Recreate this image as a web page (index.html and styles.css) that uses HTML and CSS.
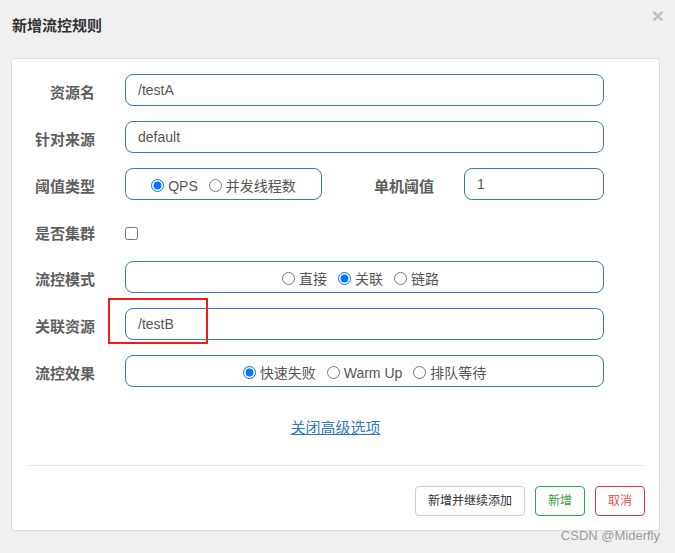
FILE: index.html
```html
<!DOCTYPE html>
<html lang="zh-CN">
<head>
<meta charset="utf-8">
<title>新增流控规则</title>
<link rel="stylesheet" href="styles.css">
</head>
<body>
<div class="modal">
  <div class="header">
    <div class="title">新增流控规则</div>
    <span class="close">×</span>
  </div>
  <div class="card">
    <div class="form">
      <div class="row">
        <label class="label">资源名</label>
        <div class="control"><input class="input" type="text" value="/testA"></div>
      </div>
      <div class="row">
        <label class="label">针对来源</label>
        <div class="control"><input class="input" type="text" value="default"></div>
      </div>
      <div class="row">
        <label class="label">阈值类型</label>
        <div class="box box-small">
          <label class="opt"><input class="radio" type="radio" name="grade" checked>QPS</label>
          <label class="opt"><input class="radio" type="radio" name="grade">并发线程数</label>
        </div>
        <label class="label label-mid">单机阈值</label>
        <input class="input input-small" type="text" value="1">
      </div>
      <div class="row row-check">
        <label class="label">是否集群</label>
        <input class="check" type="checkbox">
      </div>
      <div class="row">
        <label class="label">流控模式</label>
        <div class="box box-wide shift">
          <label class="opt"><input class="radio" type="radio" name="mode">直接</label>
          <label class="opt"><input class="radio" type="radio" name="mode" checked>关联</label>
          <label class="opt"><input class="radio" type="radio" name="mode">链路</label>
        </div>
      </div>
      <div class="row row-mark">
        <label class="label">关联资源</label>
        <div class="control"><input class="input" type="text" value="/testB"></div>
        <div class="mark"></div>
      </div>
      <div class="row">
        <label class="label">流控效果</label>
        <div class="box box-wide">
          <label class="opt"><input class="radio" type="radio" name="effect" checked>快速失败</label>
          <label class="opt"><input class="radio" type="radio" name="effect">Warm Up</label>
          <label class="opt"><input class="radio" type="radio" name="effect">排队等待</label>
        </div>
      </div>
    </div>
    <div class="more"><a class="link" href="#">关闭高级选项</a></div>
    <div class="footer">
      <button class="btn btn-default">新增并继续添加</button>
      <button class="btn btn-ok">新增</button>
      <button class="btn btn-cancel">取消</button>
    </div>
  </div>
</div>
<div class="watermark">CSDN @Miderfly</div>
</body>
</html>
```
FILE: styles.css
```css
html, body {
  margin: 0;
  padding: 0;
  background: #f0f0f0;
  font-family: "Liberation Sans", "Noto Sans CJK SC", sans-serif;
  color: #333;
}

.modal {
  width: 675px;
  height: 553px;
}

.header {
  display: flex;
  justify-content: space-between;
  align-items: flex-start;
  padding: 15px 11px 21px 12px;
}

.title {
  font-size: 15px;
  font-weight: bold;
  line-height: 22px;
  color: #333;
}

.close {
  font-size: 21px;
  font-weight: bold;
  line-height: 21px;
  color: #c0c0c0;
  margin-top: -10px;
}

.card {
  margin: 0 15px 0 11px;
  background: #fff;
  border: 1px solid #dcdcdc;
  border-radius: 4px;
}

.form {
  display: flex;
  flex-direction: column;
  gap: 15px;
  padding: 15px 55px 0 0;
}

.row {
  display: flex;
  align-items: flex-start;
  height: 32px;
}

.row-check {
  height: 31px;
}

.row-mark {
  position: relative;
}

.label {
  box-sizing: border-box;
  width: 98px;
  flex: none;
  padding: 8px 15px 0 0;
  margin-right: 15px;
  text-align: right;
  font-size: 15px;
  font-weight: bold;
  line-height: 22px;
  color: #5e5e5e;
}

.label-mid {
  width: 112px;
  padding-right: 0;
  margin: 0 30px 0 0;
  padding-top: 8px;
}

.control {
  flex: 1;
}

.input {
  box-sizing: border-box;
  display: block;
  width: 100%;
  height: 32px;
  margin: 0;
  padding: 0 12px;
  border: 1px solid #3a7ab8;
  border-radius: 8px;
  background: #fff;
  font-family: "Liberation Sans", "Noto Sans CJK SC", sans-serif;
  font-size: 14px;
  color: #555;
  outline: none;
}

.input-small {
  width: 140px;
  flex: none;
}

.box {
  box-sizing: border-box;
  height: 32px;
  border: 1px solid #3a7ab8;
  border-radius: 8px;
  display: flex;
  justify-content: center;
  align-items: center;
  gap: 11px;
  padding-top: 3px;
  font-size: 14px;
  color: #555;
}

.box-small {
  width: 197px;
  flex: none;
}

.box-wide {
  flex: 1;
}

.shift {
  padding-right: 8px;
}

.opt {
  display: inline-flex;
  align-items: center;
  line-height: 20px;
  white-space: nowrap;
}

.radio {
  width: 13px;
  height: 13px;
  margin: 0 4px 0 0;
}

.check {
  width: 13px;
  height: 13px;
  margin: 12px 0 0 0;
}

.mark {
  position: absolute;
  left: 96px;
  top: -10px;
  width: 100px;
  height: 46px;
  box-sizing: border-box;
  border: 2px solid #f01c1c;
}

.more {
  text-align: center;
  margin: 30px 0 26px;
  line-height: 22px;
}

.link {
  font-size: 15px;
  color: #337ab7;
  text-decoration: underline;
}

.footer {
  display: flex;
  justify-content: flex-end;
  gap: 10px;
  margin: 0 14px 0 15px;
  padding: 20px 0 14px;
  border-top: 1px solid #e5e5e5;
}

.btn {
  box-sizing: border-box;
  height: 30px;
  padding: 0 12px;
  border-radius: 4px;
  background: #fff;
  font-family: "Liberation Sans", "Noto Sans CJK SC", sans-serif;
  font-size: 12px;
  line-height: 28px;
  cursor: pointer;
}

.btn-default {
  border: 1px solid #ccc;
  color: #333;
}

.btn-ok {
  border: 1px solid #28a745;
  color: #3a9a3a;
}

.btn-cancel {
  border: 1px solid #dc3545;
  color: #d9534f;
}

.watermark {
  position: absolute;
  right: 15px;
  top: 528px;
  font-size: 13px;
  line-height: 15px;
  color: #9c9c9c;
}
```
